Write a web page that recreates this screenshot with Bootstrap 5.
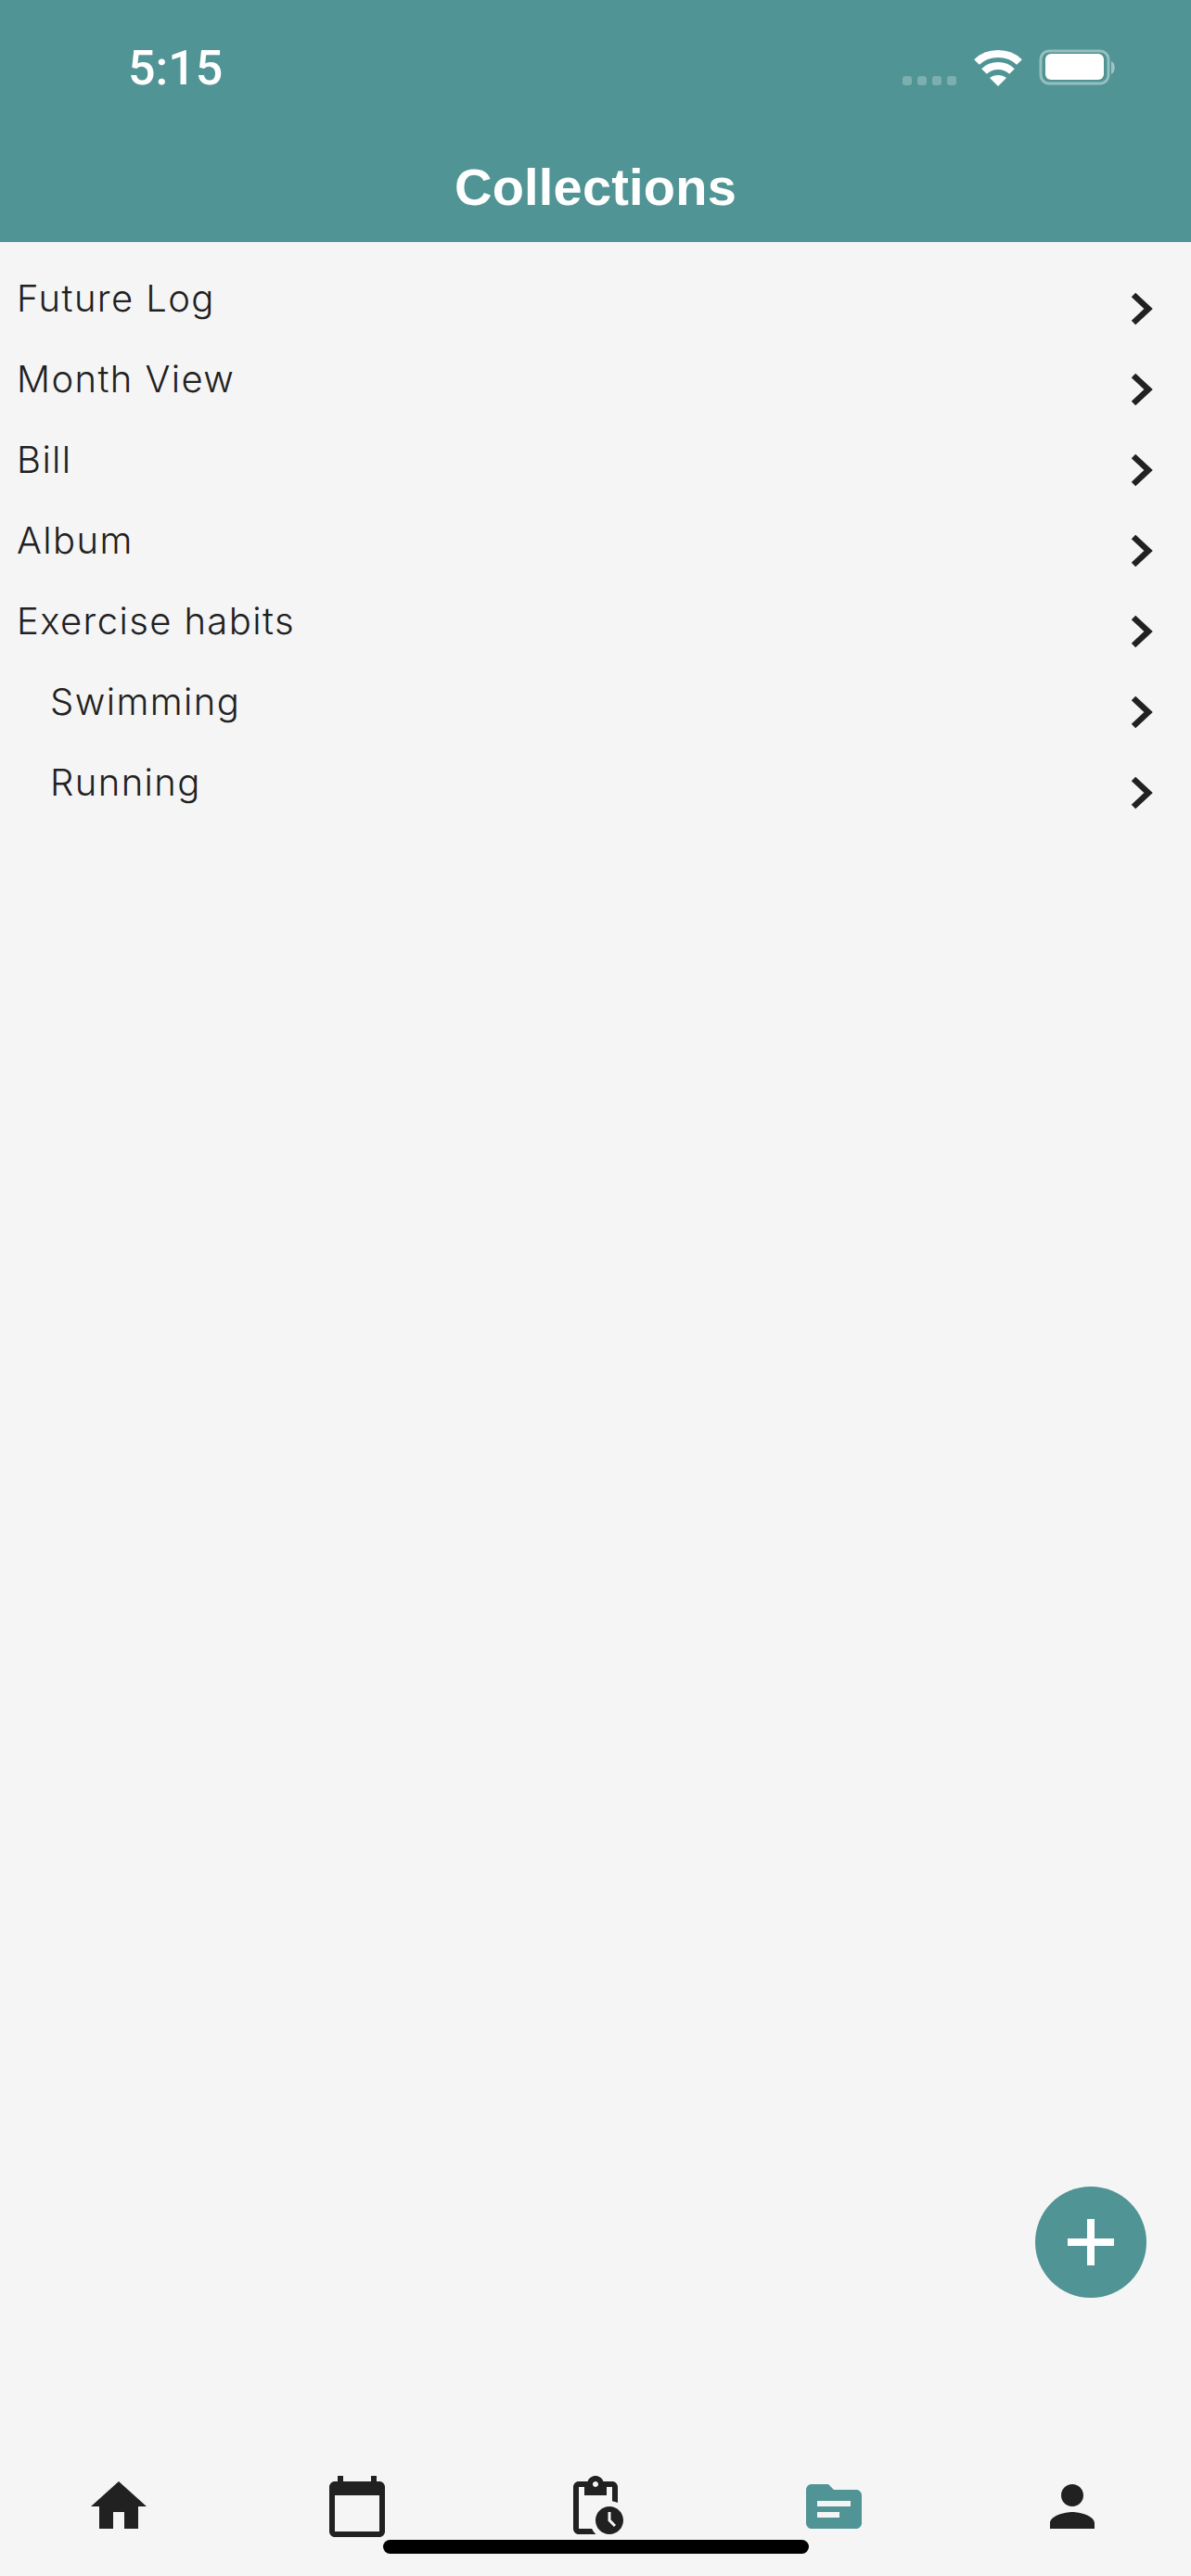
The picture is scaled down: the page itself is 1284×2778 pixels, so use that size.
<!DOCTYPE html>
<html lang="en">
<head>
    <meta charset="UTF-8">
    <meta name="viewport" content="width=device-width, initial-scale=1.0">
    <title>Collections</title>
    <link rel="stylesheet" href="https://cdn.jsdelivr.net/npm/bootstrap@5.3.0/dist/css/bootstrap.min.css">
    <style>
        body { background-color: #f5f5f5; }
        .phone-screen { height: 2778px; width: 1284px; overflow: hidden; position: relative; }
        .top-head { background-color: #519495; height: 261px; color: #fff; font-family: "Liberation Sans", sans-serif; }
        .status-row { height: 152px; padding: 52px 82px 0 138px; }
        .clock-text { font-size: 52px; line-height: 44px; font-weight: 500; font-family: Roboto, sans-serif; }
        .head-title { font-size: 56px; font-weight: 700; line-height: 100px; letter-spacing: .2px; text-align: center; margin: 0; }
        .coll-list { padding-top: 17px; }
        .coll-row { height: 87px; padding: 0 41px 0 18px; color: #212121; font-family: Inter, sans-serif; font-size: 40px; font-weight: 300; letter-spacing: 1.4px; line-height: 87px; }
        .coll-row.sub-row { padding-left: 54px; }
        .coll-row svg { margin-top: 37px; }
        .add-fab { position: absolute; left: 1116px; top: 2358px; width: 120px; height: 120px; border-radius: 50%; background-color: #519495; border: 0; padding: 0; }
        .tab-bar { position: absolute; left: 0; right: 0; top: 2667px; height: 72px; }
        .tab-slot { width: 20%; }
        .tab-slot svg { fill: #212121; }
        .tab-slot.tab-on svg { fill: #519495; }
        .home-bar { position: absolute; left: 413px; top: 2739px; width: 459px; height: 15px; border-radius: 8px; background-color: #000; }
    </style>
</head>
<body>
<div class="phone-screen">
    <div class="top-head">
        <div class="status-row d-flex justify-content-between">
            <span class="clock-text">5:15</span>
            <svg width="230" height="42" viewBox="0 0 230 42">
                <g fill="#fff" fill-opacity=".25">
                    <rect x="1" y="30" width="10" height="10" rx="3"/><rect x="17" y="30" width="10" height="10" rx="3"/><rect x="33" y="30" width="10" height="10" rx="3"/><rect x="49" y="30" width="10" height="10" rx="3"/>
                </g>
                <g fill="none" stroke="#fff" stroke-width="8">
                    <path d="M81 15 C93 3 115 3 127 15"/>
                    <path d="M89 25 C97 17 111 17 119 25"/>
                </g>
                <path d="M95 32 C100 28 108 28 113 32 L104 41 Z" fill="#fff"/>
                <rect x="150" y="3" width="73" height="35" rx="9" fill="none" stroke="#fff" stroke-opacity=".4" stroke-width="3"/>
                <rect x="155" y="6" width="63" height="28" rx="6" fill="#fff"/>
                <path d="M226 14 C231 16 231 26 226 28 Z" fill="#fff" fill-opacity=".45"/>
            </svg>
        </div>
        <h1 class="head-title">Collections</h1>
    </div>

    <div class="coll-list">
        <div class="coll-row d-flex justify-content-between"><span>Future Log</span><svg width="24" height="36" viewBox="0 0 24 36"><path d="M3 3 L19 18 L3 33" fill="none" stroke="#212121" stroke-width="6.5"/></svg></div>
        <div class="coll-row d-flex justify-content-between"><span>Month View</span><svg width="24" height="36" viewBox="0 0 24 36"><path d="M3 3 L19 18 L3 33" fill="none" stroke="#212121" stroke-width="6.5"/></svg></div>
        <div class="coll-row d-flex justify-content-between"><span>Bill</span><svg width="24" height="36" viewBox="0 0 24 36"><path d="M3 3 L19 18 L3 33" fill="none" stroke="#212121" stroke-width="6.5"/></svg></div>
        <div class="coll-row d-flex justify-content-between"><span>Album</span><svg width="24" height="36" viewBox="0 0 24 36"><path d="M3 3 L19 18 L3 33" fill="none" stroke="#212121" stroke-width="6.5"/></svg></div>
        <div class="coll-row d-flex justify-content-between"><span>Exercise habits</span><svg width="24" height="36" viewBox="0 0 24 36"><path d="M3 3 L19 18 L3 33" fill="none" stroke="#212121" stroke-width="6.5"/></svg></div>
        <div class="coll-row sub-row d-flex justify-content-between"><span>Swimming</span><svg width="24" height="36" viewBox="0 0 24 36"><path d="M3 3 L19 18 L3 33" fill="none" stroke="#212121" stroke-width="6.5"/></svg></div>
        <div class="coll-row sub-row d-flex justify-content-between"><span>Running</span><svg width="24" height="36" viewBox="0 0 24 36"><path d="M3 3 L19 18 L3 33" fill="none" stroke="#212121" stroke-width="6.5"/></svg></div>
    </div>

    <button class="add-fab d-flex align-items-center justify-content-center" type="button" aria-label="Add">
        <svg width="50" height="50" viewBox="0 0 50 50"><path d="M21 0h8v21h21v8H29v21h-8V29H0v-8h21z" fill="#fff"/></svg>
    </button>

    <div class="tab-bar d-flex">
        <div class="tab-slot d-flex justify-content-center"><svg width="72" height="72" viewBox="0 0 24 24"><path d="M10 20v-6h4v6h5v-8h3L12 3 2 12h3v8z"/></svg></div>
        <div class="tab-slot d-flex justify-content-center"><svg width="72" height="72" viewBox="0 0 24 24"><path d="M20 3h-1V1h-2v2H7V1H5v2H4c-1.100 0-2 .9-2 2v16c0 1.100.9 2 2 2h16c1.100 0 2-.9 2-2V5c0-1.100-.9-2-2-2zm0 18H4V8h16v13z"/></svg></div>
        <div class="tab-slot d-flex justify-content-center"><svg width="72" height="72" viewBox="0 0 24 24"><path d="M17 12c-2.760 0-5 2.240-5 5s2.240 5 5 5 5-2.240 5-5-2.240-5-5-5zm1.650 7.350L16.500 17.200V14h1v2.790l1.850 1.850-.7.710zM18 3h-3.180C14.400 1.840 13.300 1 12 1s-2.400.84-2.820 2H6c-1.100 0-2 .9-2 2v15c0 1.100.9 2 2 2h6.110c-.59-.57-1.070-1.250-1.420-2H6V5h2v3h8V5h2v5.080c.71.1 1.380.31 2 .6V5c0-1.100-.9-2-2-2zm-6 2c-.55 0-1-.45-1-1s.45-1 1-1 1 .45 1 1-.45 1-1 1z"/></svg></div>
        <div class="tab-slot tab-on d-flex justify-content-center"><svg width="72" height="72" viewBox="0 0 24 24"><path d="M20 6h-8l-2-2H4c-1.100 0-1.990.9-1.990 2L2 18c0 1.100.9 2 2 2h16c1.100 0 2-.9 2-2V8c0-1.100-.9-2-2-2zm-6 10H6v-2h8v2zm4-4H6v-2h12v2z"/></svg></div>
        <div class="tab-slot d-flex justify-content-center"><svg width="72" height="72" viewBox="0 0 24 24"><path d="M12 12c2.210 0 4-1.790 4-4s-1.790-4-4-4-4 1.790-4 4 1.790 4 4 4zm0 2c-2.670 0-8 1.340-8 4v2h16v-2c0-2.660-5.330-4-8-4z"/></svg></div>
    </div>
    <div class="home-bar"></div>
</div>
<script src="https://cdn.jsdelivr.net/npm/bootstrap@5.3.0/dist/js/bootstrap.bundle.min.js"></script>
</body>
</html>
